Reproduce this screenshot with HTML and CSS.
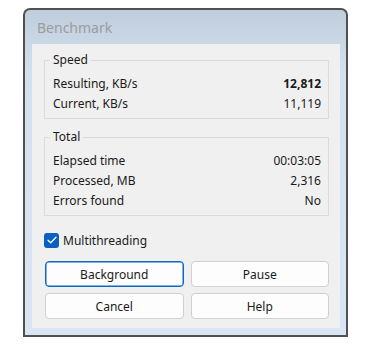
FILE: index.html
```html
<!DOCTYPE html>
<html>
<head>
  <title>Benchmark</title>
  <link rel="stylesheet" href="styles.css">
</head>
<body>
  <!-- Dialog window -->
  <div class="window">
    <div class="title-bar">Benchmark</div>

    <div class="frame">
      <div class="panel">
        <fieldset class="group">
          <legend>Speed</legend>
          <div class="row"><span>Resulting, KB/s</span><span class="value bold">12,812</span></div>
          <div class="row"><span>Current, KB/s</span><span class="value">11,119</span></div>
        </fieldset>

        <fieldset class="group total">
          <legend>Total</legend>
          <div class="row"><span>Elapsed time</span><span class="value">00:03:05</span></div>
          <div class="row"><span>Processed, MB</span><span class="value">2,316</span></div>
          <div class="row"><span>Errors found</span><span class="value">No</span></div>
        </fieldset>

        <label class="check">
          <span class="check-box">
            <svg width="10" height="8" viewBox="0 0 10 8"><path d="M1 4.2 L3.7 6.8 L9 1.2" fill="none" stroke="#fff" stroke-width="1.3" stroke-linecap="round" stroke-linejoin="round"/></svg>
          </span>
          Multithreading
        </label>

        <div class="buttons">
          <button class="btn default">Background</button>
          <button class="btn">Pause</button>
          <button class="btn">Cancel</button>
          <button class="btn">Help</button>
        </div>
      </div>
    </div>
  </div>
</body>
</html>
```

FILE: styles.css
```css
body {
  margin: 0;
  padding: 0;
  background-color: #ffffff;
  font-family: 'Noto Sans', 'Open Sans', sans-serif;
  font-size: 12px;
  color: #1a1a1a;
}

.window {
  width: 325px;
  height: 329px;
  margin: 8px 0 0 23px;
  box-sizing: border-box;
  border: 2px solid #505050;
  border-radius: 7px 7px 0 0;
  background: linear-gradient(to bottom, #bfcddc 0px, #d3e0ed 60px, #d9e5f2 100%);
  display: flex;
  flex-direction: column;
}

.title-bar {
  height: 36px;
  padding-left: 12px;
  display: flex;
  align-items: center;
  font-size: 14px;
  color: #9c9c9c;
}

.frame {
  flex: 1;
  padding: 0 6px 7px 7px;
  display: flex;
}

.panel {
  flex: 1;
  background-color: #f0f0f0;
  padding: 8px 11px 9px 12px;
  display: flex;
  flex-direction: column;
}

.group {
  margin: 0;
  padding: 0 7px 5px 8px;
  border: 1px solid #dcdcdc;
}

.group legend {
  margin-left: -3px;
  padding: 0 3px;
  line-height: 16px;
  margin-bottom: 5px;
}

.group.total {
  margin-top: 10px;
}

.row {
  height: 20px;
  display: flex;
  align-items: center;
  justify-content: space-between;
}

.bold {
  font-weight: bold;
}

.check {
  margin-top: 16px;
  height: 16px;
  display: flex;
  align-items: center;
  gap: 4px;
}

.check-box {
  width: 15px;
  height: 15px;
  border-radius: 3px;
  background-color: #0a5fc1;
  display: flex;
  align-items: center;
  justify-content: center;
}

.buttons {
  margin: 13px 0 0 1px;
  display: grid;
  grid-template-columns: 1fr 1fr;
  gap: 6px 7px;
}

.btn {
  height: 26px;
  font-family: inherit;
  font-size: 12px;
  color: #1a1a1a;
  background-color: #fdfdfd;
  border: 1px solid #d0d0d0;
  border-radius: 4px;
  padding: 0;
}

.btn.default {
  border-color: #0b68c6;
  box-shadow: inset 0 0 0 0.5px #0b68c6;
}
```
